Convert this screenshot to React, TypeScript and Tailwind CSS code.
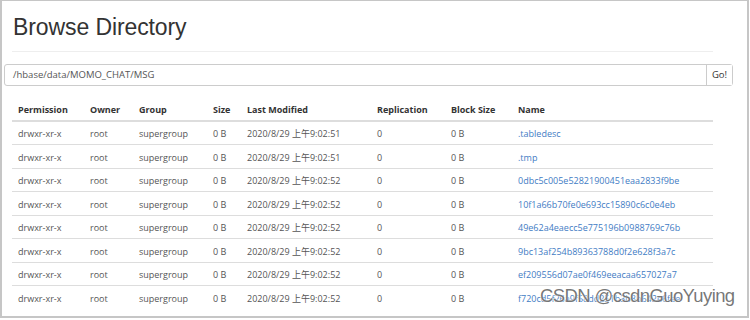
import React from "react";

const rows = [
  { t: "2020/8/29 上午9:02:51", n: ".tabledesc" },
  { t: "2020/8/29 上午9:02:51", n: ".tmp" },
  { t: "2020/8/29 上午9:02:52", n: "0dbc5c005e52821900451eaa2833f9be" },
  { t: "2020/8/29 上午9:02:52", n: "10f1a66b70fe0e693cc15890c6c0e4eb" },
  { t: "2020/8/29 上午9:02:52", n: "49e62a4eaecc5e775196b0988769c76b" },
  { t: "2020/8/29 上午9:02:52", n: "9bc13af254b89363788d0f2e628f3a7c" },
  { t: "2020/8/29 上午9:02:52", n: "ef209556d07ae0f469eeacaa657027a7" },
  { t: "2020/8/29 上午9:02:52", n: "f720cd5f26a9f58dd251b3b8b642e6fae" },
];

const widths = [72, 49, 74, 34, 130, 74, 67, 201];
const heads = ["Permission", "Owner", "Group", "Size", "Last Modified", "Replication", "Block Size", "Name"];

export default function App() {
  return (
    <div className="w-[750px] h-[320px] bg-white overflow-hidden">
      <div
        className="relative w-[749px] h-[318px] border-l-2 border-t border-r-2 border-b-2 border-[#c6c6c6] overflow-hidden"
        style={{ fontFamily: '"Open Sans", "Noto Sans CJK SC", sans-serif' }}
      >
        <h1
          className="ml-[11px] mt-[12px] text-[23px] leading-[28px] text-[#333] tracking-[-0.1px]"
          style={{ fontFamily: '"Liberation Sans", Arial, sans-serif' }}
        >
          Browse Directory
        </h1>
        <div className="ml-[10px] w-[701px] mt-[10px] border-t border-[#eee]" />
        <div className="ml-[2px] mt-[12px] w-[729px] h-[22px] flex border border-[#ccc] rounded-[3px]">
          <div className="flex-1 flex items-center pl-[8px] text-[9.5px] text-[#555]">/hbase/data/MOMO_CHAT/MSG</div>
          <div className="w-[26px] flex items-center justify-center border-l border-[#ccc] bg-white text-[9.5px] text-[#333]">Go!</div>
        </div>
        <table className="ml-[10px] mt-[11px] w-[701px] table-fixed border-collapse text-[9px]">
          <colgroup>
            {widths.map((w, i) => (
              <col key={i} style={{ width: w }} />
            ))}
          </colgroup>
          <thead>
            <tr className="h-[24px] border-b-2 border-[#ddd]">
              {heads.map((h) => (
                <th key={h} className="text-left font-bold text-[#333] pl-[6px] pt-[3px] whitespace-nowrap">
                  {h}
                </th>
              ))}
            </tr>
          </thead>
          <tbody>
            {rows.map((r, i) => (
              <tr key={i} className={`h-[23.5px] ${i > 0 ? "border-t border-[#ddd]" : ""}`}>
                <td className="pl-[6px] pt-[2px] text-[#555] whitespace-nowrap">drwxr-xr-x</td>
                <td className="pl-[6px] pt-[2px] text-[#555] whitespace-nowrap">root</td>
                <td className="pl-[6px] pt-[2px] text-[#555] whitespace-nowrap">supergroup</td>
                <td className="pl-[6px] pt-[2px] text-[#555] whitespace-nowrap">0 B</td>
                <td className="pl-[6px] pt-[2px] text-[#555] whitespace-nowrap">{r.t}</td>
                <td className="pl-[6px] pt-[2px] text-[#555] whitespace-nowrap">0</td>
                <td className="pl-[6px] pt-[2px] text-[#555] whitespace-nowrap">0 B</td>
                <td className="pl-[6px] pt-[2px] text-[#3f7cc4] whitespace-nowrap">{r.n}</td>
              </tr>
            ))}
          </tbody>
        </table>
        <div
          className="absolute left-[538px] top-[282px] text-[18.5px] leading-[26px] tracking-[-0.6px] text-[#5e5e5e]/85 whitespace-nowrap"
          style={{
            fontFamily: '"Liberation Sans", Arial, sans-serif',
            textShadow: "0 0 2px #fff, 0 0 1px #fff",
          }}
        >
          CSDN @csdnGuoYuying
        </div>
      </div>
    </div>
  );
}
